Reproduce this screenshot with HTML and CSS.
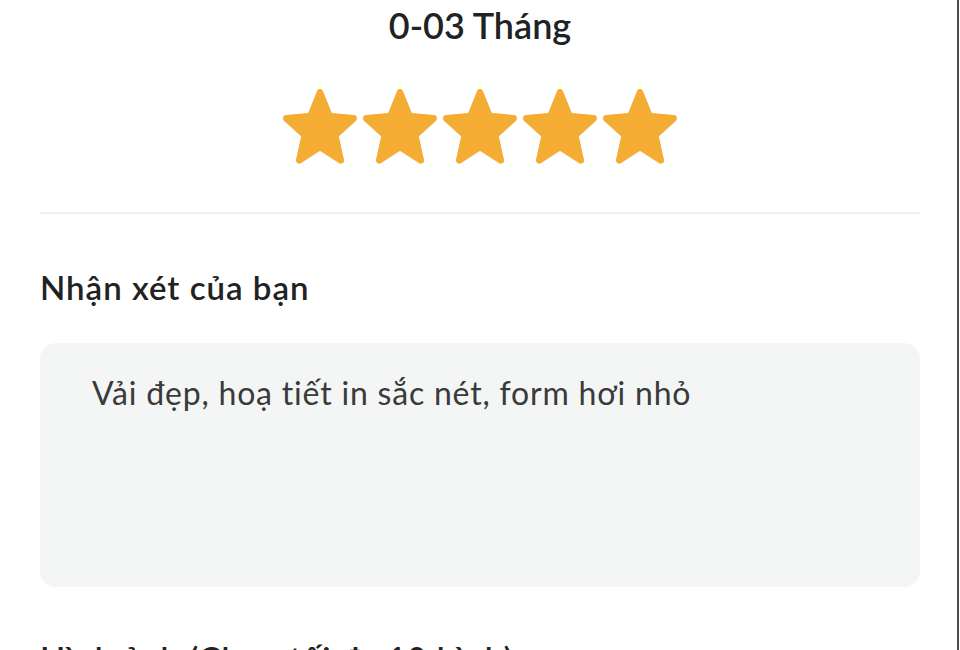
FILE: index.html
```html
<!DOCTYPE html>
<html lang="vi">
<head>
  <meta charset="UTF-8">
  <meta name="viewport" content="width=device-width, initial-scale=1.0">
  <title>Đánh giá sản phẩm</title>
  <link rel="stylesheet" href="styles.css">
</head>
<body>
<div class="screen">
  <h1 class="age">0-03 Tháng</h1>
  <div class="stars">
    <svg class="star" viewBox="4 5 92 88" preserveAspectRatio="none"><polygon points="50,9 61.76,36.82 91.85,39.4 69.02,59.18 75.86,88.6 50,73 24.14,88.6 30.98,59.18 8.15,39.4 38.24,36.82"/></svg>
    <svg class="star" viewBox="4 5 92 88" preserveAspectRatio="none"><polygon points="50,9 61.76,36.82 91.85,39.4 69.02,59.18 75.86,88.6 50,73 24.14,88.6 30.98,59.18 8.15,39.4 38.24,36.82"/></svg>
    <svg class="star" viewBox="4 5 92 88" preserveAspectRatio="none"><polygon points="50,9 61.76,36.82 91.85,39.4 69.02,59.18 75.86,88.6 50,73 24.14,88.6 30.98,59.18 8.15,39.4 38.24,36.82"/></svg>
    <svg class="star" viewBox="4 5 92 88" preserveAspectRatio="none"><polygon points="50,9 61.76,36.82 91.85,39.4 69.02,59.18 75.86,88.6 50,73 24.14,88.6 30.98,59.18 8.15,39.4 38.24,36.82"/></svg>
    <svg class="star" viewBox="4 5 92 88" preserveAspectRatio="none"><polygon points="50,9 61.76,36.82 91.85,39.4 69.02,59.18 75.86,88.6 50,73 24.14,88.6 30.98,59.18 8.15,39.4 38.24,36.82"/></svg>
  </div>
  <hr class="divider">
  <h2 class="field-label">Nhận xét của bạn</h2>
  <textarea class="review">Vải đẹp, hoạ tiết in sắc nét, form hơi nhỏ</textarea>
  <h2 class="field-label photos">Hình ảnh (Chọn tối đa 10 hình)</h2>
</div>
</body>
</html>
```

FILE: styles.css
```css
:root {
  --star-color: #F5AC32;
  --text-color: #222;
  --field-bg: #F4F6F6;
  --line-color: #F0F0F0;
}
* { box-sizing: border-box; }
html, body { margin: 0; padding: 0; overflow: hidden; background: #fff; }
body { font-family: 'Lato', 'Noto Sans', sans-serif; color: var(--text-color); line-height: 1.2; }
.screen { width: 959px; min-height: 100vh; padding: 4px 37px 0 40px; border-right: 2px solid #4d4d4d; display: flex; flex-direction: column; }
.age { margin: 0; font-size: 36px; font-weight: 600; line-height: 1.2; text-align: center; }
.stars { display: flex; justify-content: center; gap: 6px; margin-top: 42px; }
.star { display: block; width: 74px; height: 75px; fill: var(--star-color); stroke: var(--star-color); stroke-width: 8; stroke-linejoin: round; }
.divider { margin: 48px 0 0; border: none; height: 2px; background: var(--line-color); }
.field-label { margin: 54px 0 0; font-size: 33px; font-weight: 600; line-height: 1.2; letter-spacing: 1px; }
.review { display: block; margin-top: 35px; width: 100%; height: 244px; padding: 31px 52px; border: none; border-radius: 16px; background: var(--field-bg); font-family: inherit; font-size: 32px; line-height: 1.2; letter-spacing: 0.8px; color: #3a3a3a; resize: none; outline: none; }
.field-label.photos { margin-top: 52px; }
```
